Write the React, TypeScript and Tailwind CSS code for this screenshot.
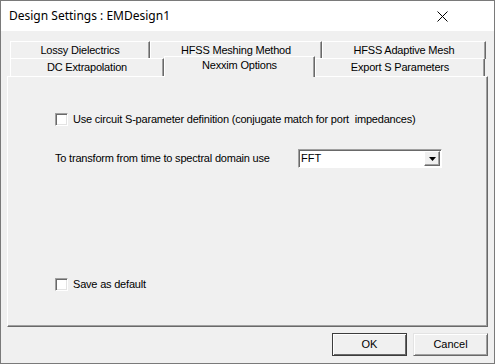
import React from 'react';

const font = { fontFamily: '"Liberation Sans", Arial, sans-serif' };

const Tab: React.FC<{ label: string; w: string; selected?: boolean }> = ({ label, w, selected }) => (
  <div
    className={`${w} flex items-center justify-center border-l border-t border-r border-l-white border-t-white border-r-[#696969] bg-[#f0f0f0] text-[11px] tracking-[-0.2px] text-black shadow-[inset_-1px_0_0_#a0a0a0] ${
      selected ? 'relative z-10 h-[21px] -mb-px pb-[3px]' : 'h-[18px]'
    }`}
  >
    {label}
  </div>
);

const CheckBox: React.FC<{ label: string }> = ({ label }) => (
  <label className="flex items-center gap-[5px] h-[13px]">
    <span className="w-[13px] h-[13px] bg-white border border-t-[#a0a0a0] border-l-[#a0a0a0] border-r-white border-b-white shadow-[inset_1px_1px_0_#696969,inset_-1px_-1px_0_#e3e3e3]" />
    <span className="text-[11px] tracking-[-0.2px] text-black leading-none whitespace-pre">{label}</span>
  </label>
);

const App: React.FC = () => {
  return (
    <div
      className="w-[495px] h-[364px] bg-[#f0f0f0] border border-[#7a7a7a] flex flex-col overflow-hidden"
      style={font}
    >
      {/* title bar */}
      <div className="h-[30px] bg-white flex items-center justify-between pl-[8px] pr-[46px]">
        <span className="text-[12px] text-black" style={{ fontFamily: '"Noto Sans", "Liberation Sans", sans-serif' }}>
          Design Settings : EMDesign1
        </span>
        <svg width="11" height="11" viewBox="0 0 11 11" className="mt-[1px]">
          <path d="M0.5 0.5 L10.5 10.5 M10.5 0.5 L0.5 10.5" stroke="#000" strokeWidth="1" />
        </svg>
      </div>

      {/* body */}
      <div className="flex flex-col pt-[10px] pl-[6px]">
        <div className="flex pl-[3px]">
          <Tab label="Lossy Dielectrics" w="w-[140px]" />
          <Tab label="HFSS Meshing Method" w="w-[172px]" />
          <Tab label="HFSS Adaptive Mesh" w="w-[164px]" />
        </div>
        <div className="flex items-end h-[18px] pl-[3px] -mt-px">
          <Tab label="DC Extrapolation" w="w-[154px]" />
          <Tab label="Nexxim Options" w="w-[151px]" selected />
          <Tab label="Export S Parameters" w="w-[170px]" />
        </div>

        {/* panel */}
        <div className="w-[481px] h-[251px] border-l border-t border-l-white border-t-white border-r border-b border-r-[#696969] border-b-[#696969] shadow-[inset_-1px_-1px_0_#a0a0a0] flex flex-col pl-[47px] pt-[36px]">
          <CheckBox label="Use circuit S-parameter definition (conjugate match for port  impedances)" />

          <div className="flex items-center mt-[23px]">
            <span className="w-[243px] text-[11px] tracking-[-0.2px] text-black">To transform from time to spectral domain use</span>
            <div className="w-[144px] h-[19px] bg-white border border-t-[#a0a0a0] border-l-[#a0a0a0] border-r-white border-b-white shadow-[inset_1px_1px_0_#696969] flex items-center justify-between pl-[2px] pr-px">
              <span className="text-[11px] text-black">FFT</span>
              <div className="w-[16px] h-[15px] bg-[#f0f0f0] border border-t-white border-l-white border-r-[#696969] border-b-[#696969] shadow-[inset_-1px_-1px_0_#a0a0a0] flex items-center justify-center">
                <svg width="7" height="4" viewBox="0 0 7 4">
                  <path d="M0 0 H7 L3.5 4 Z" fill="#000" />
                </svg>
              </div>
            </div>
          </div>

          <div className="mt-[110px]">
            <CheckBox label="Save as default" />
          </div>
        </div>

        {/* buttons */}
        <div className="flex justify-end gap-[6px] mt-[6px] w-[481px]">
          <button className="w-[75px] h-[23px] border border-[#3c3c3c] bg-[#f0f0f0] shadow-[inset_1px_1px_0_#fff,inset_-1px_-1px_0_#696969] text-[11px] text-black">
            OK
          </button>
          <button className="w-[75px] h-[23px] border border-t-[#e3e3e3] border-l-[#e3e3e3] border-r-[#696969] border-b-[#696969] bg-[#f0f0f0] shadow-[inset_1px_1px_0_#fff,inset_-1px_-1px_0_#a0a0a0] text-[11px] text-black">
            Cancel
          </button>
        </div>
      </div>
    </div>
  );
};

export default App;
